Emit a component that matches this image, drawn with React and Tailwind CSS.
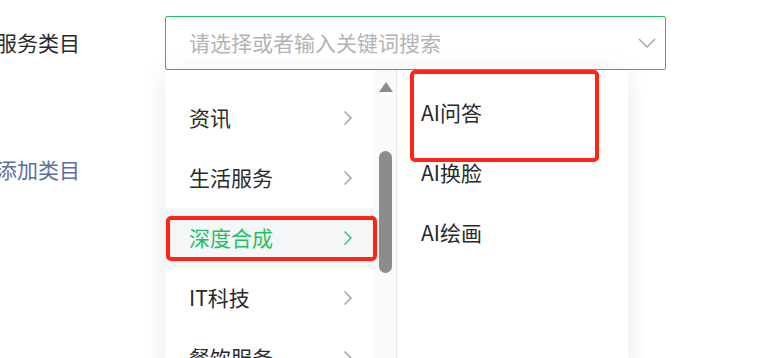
const font = { fontFamily: '"Noto Sans CJK SC", "Liberation Sans", sans-serif' }

const cats = ['资讯', '生活服务', '深度合成', 'IT科技', '餐饮服务']
const subs = ['AI问答', 'AI换脸', 'AI绘画']

function Chevron({ active }) {
  return (
    <svg width="10" height="16" viewBox="0 0 10 16" className={active ? 'text-[#1ec265]' : 'text-[#9a9a9a]'}>
      <polyline points="1.5,1.5 8,8 1.5,14.5" fill="none" stroke="currentColor" strokeWidth="1.3" />
    </svg>
  )
}

export default function App() {
  return (
    <div className="w-[783px] h-[358px] bg-white overflow-hidden relative text-[21px] text-[#2a2a2a]" style={font}>
      <div className="flex">
        <div className="w-[165px] shrink-0 -ml-[4px] mr-[4px]">
          <div className="h-[54px] mt-[16px] flex items-center">服务类目</div>
          <div className="mt-[84px] text-[#5b6e9c]">添加类目</div>
        </div>

        <div className="relative mt-[16px]">
          <div className="w-[501px] h-[54px] border border-[#1ec265] rounded-[2px] flex items-center justify-between pl-[23px] pr-[8px]">
            <span className="text-[#b3b3b3]">请选择或者输入关键词搜索</span>
            <svg width="20" height="12" viewBox="0 0 20 12" className="text-[#a0a0a0]">
              <polyline points="2,2 10,10 18,2" fill="none" stroke="currentColor" strokeWidth="1.3" />
            </svg>
          </div>

          {/* dropdown */}
          <div className="absolute left-0 top-[54px] flex h-[300px] shadow-[0_4px_24px_rgba(0,0,0,0.09)]">
            <div className="w-[232px] bg-white border-r border-[#e4e7ed] flex">
              <div className="w-[209px] pt-[18px]">
                {cats.map((c) => {
                  const active = c === '深度合成'
                  return (
                    <div
                      key={c}
                      className={`h-[60px] flex items-center justify-between pl-[24px] pr-[21px] ${active ? 'bg-[#f5f6f7] text-[#1ec265]' : ''}`}
                    >
                      <span>{c}</span>
                      <Chevron active={active} />
                    </div>
                  )
                })}
              </div>
              <div className="w-[22px] bg-[#fafafa] flex flex-col items-center pt-[12px]">
                <div className="w-0 h-0 border-l-[7px] border-r-[7px] border-b-[10px] border-l-transparent border-r-transparent border-b-[#8c8c8c] ml-[1px]" />
                <div className="w-[13px] h-[122px] rounded-full bg-[#8c8c8c] mt-[59px] ml-[1px]" />
              </div>
            </div>
            <div className="w-[231px] bg-white pt-[13px]">
              {subs.map((s) => (
                <div key={s} className="h-[60px] flex items-center pl-[24px]">
                  {s}
                </div>
              ))}
            </div>
          </div>

          {/* annotation boxes */}
          <div className="absolute left-[1px] top-[200px] w-[211px] h-[45px] border-[4px] border-[#ff2414] rounded-[5px]" />
          <div className="absolute left-[245px] top-[54px] w-[189px] h-[92px] border-[4px] border-[#ff2414] rounded-[5px]" />
        </div>
      </div>
    </div>
  )
}
